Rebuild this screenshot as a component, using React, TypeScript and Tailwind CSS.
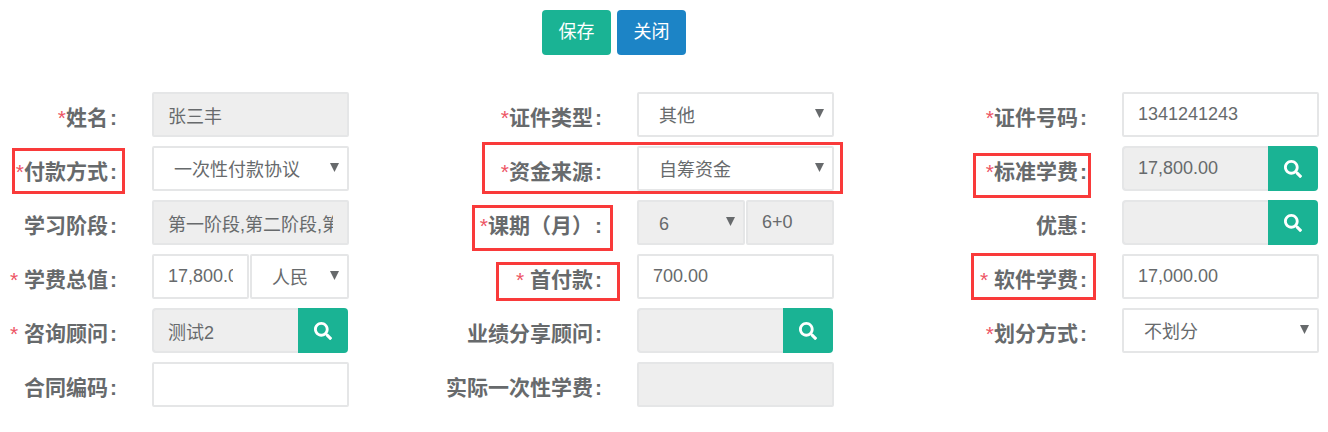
import React from "react";
import { FaSearch } from "react-icons/fa";

const fieldBase =
  "h-[45px] min-w-0 border-2 border-[#e5e6e7] rounded-[2px] text-[18px] text-[#676a6c] outline-none";

const Label = ({ text, star, gap }: { text: string; star?: boolean; gap?: boolean }) => (
  <label className="flex w-[117px] shrink-0 justify-end whitespace-nowrap pt-[11px] text-[21px] leading-[30px] font-bold text-[#676a6c]">
    {star && <span className="whitespace-pre font-normal text-[#ed5565]">*{gap ? " " : ""}</span>}
    <span>{text}</span>
    <span className="ml-[2px]">:</span>
  </label>
);

const Input = ({ value, disabled, className = "flex-1" }: { value?: string; disabled?: boolean; className?: string }) => (
  <input
    readOnly
    value={value ?? ""}
    className={`${fieldBase} px-[14px] ${disabled ? "bg-[#eeeeee]" : "bg-white"} ${className}`}
  />
);

const Select = ({ value, disabled, className = "" }: { value: string; disabled?: boolean; className?: string }) => (
  <div className={`relative ${className}`}>
    <div
      className={`${fieldBase} overflow-hidden whitespace-nowrap pl-[20px] pr-[30px] pt-[9px] ${disabled ? "bg-[#eeeeee]" : "bg-white"}`}
    >
      <div className="overflow-hidden">{value}</div>
    </div>
    <svg viewBox="0 0 9 9" className="absolute right-[10px] top-[17px] h-[9px] w-[9px] fill-[#676a6c]">
      <path d="M0 0h9L4.5 9z" />
    </svg>
  </div>
);

const SearchInput = ({ value }: { value?: string }) => (
  <div className="flex h-[45px] w-[196px]">
    <input
      readOnly
      value={value ?? ""}
      className="h-[45px] min-w-0 flex-1 rounded-l-[4px] border-2 border-r-0 border-[#e5e6e7] bg-[#eeeeee] px-[14px] text-[18px] text-[#676a6c] outline-none"
    />
    <button className="flex h-[45px] w-[50px] items-center justify-center rounded-r-[4px] bg-[#1ab394] text-white">
      <FaSearch size={18} />
    </button>
  </div>
);

const Row = ({ label, children }: { label: React.ReactNode; children: React.ReactNode }) => (
  <div className="flex gap-[35px]">
    {label}
    <div className="flex h-[45px] w-[197px] gap-px">{children}</div>
  </div>
);

const Mark = ({ className }: { className: string }) => (
  <div className={`pointer-events-none absolute border-[3px] border-[#f93a3a] ${className}`} />
);

export default function App() {
  return (
    <div className="relative h-[432px] w-[1328px] overflow-hidden bg-white font-['Liberation_Sans','Noto_Sans_CJK_SC',sans-serif]">
      <div className="flex gap-[6px] pl-[542px] pt-[10px]">
        <button className="h-[45px] w-[69px] rounded-[4px] bg-[#1ab394] text-[18px] text-white">保存</button>
        <button className="h-[45px] w-[69px] rounded-[4px] bg-[#1c84c6] text-[18px] text-white">关闭</button>
      </div>

      <div className="mt-[37px] grid w-[1319px] grid-cols-[349px_349px_349px] gap-x-[136px] gap-y-[9px]">
        <Row label={<Label star text="姓名" />}><Input disabled value="张三丰" /></Row>
        <Row label={<Label star text="证件类型" />}><Select value="其他" className="w-full" /></Row>
        <Row label={<Label star text="证件号码" />}><Input value="1341241243" /></Row>

        <Row label={<Label star text="付款方式" />}><Select value="一次性付款协议" className="w-full" /></Row>
        <Row label={<Label star text="资金来源" />}><Select value="自筹资金" className="w-full" /></Row>
        <Row label={<Label star text="标准学费" />}><SearchInput value="17,800.00" /></Row>

        <Row label={<Label text="学习阶段" />}><Input disabled value="第一阶段,第二阶段,第三阶段" /></Row>
        <Row label={<Label star text="课期（月）" />}>
          <Select disabled value="6" className="w-[108px] shrink-0" />
          <Input disabled value="6+0" className="w-[88px]" />
        </Row>
        <Row label={<Label text="优惠" />}><SearchInput /></Row>

        <Row label={<Label star gap text="学费总值" />}>
          <Input value="17,800.00" className="w-[97px] shrink-0" />
          <Select value="人民" className="w-[99px] shrink-0" />
        </Row>
        <Row label={<Label star gap text="首付款" />}><Input value="700.00" /></Row>
        <Row label={<Label star gap text="软件学费" />}><Input value="17,000.00" /></Row>

        <Row label={<Label star gap text="咨询顾问" />}><SearchInput value="测试2" /></Row>
        <Row label={<Label text="业绩分享顾问" />}><SearchInput /></Row>
        <Row label={<Label star text="划分方式" />}><Select value="不划分" className="w-full" /></Row>

        <Row label={<Label text="合同编码" />}><Input /></Row>
        <Row label={<Label text="实际一次性学费" />}><Input disabled /></Row>
      </div>

      {/* red annotation boxes */}
      <Mark className="left-[12px] top-[148px] h-[46px] w-[113px]" />
      <Mark className="left-[482px] top-[142px] h-[52px] w-[361px]" />
      <Mark className="left-[472px] top-[205px] h-[46px] w-[141px]" />
      <Mark className="left-[496px] top-[262px] h-[39px] w-[124px]" />
      <Mark className="left-[973px] top-[153px] h-[45px] w-[118px]" />
      <Mark className="left-[971px] top-[253px] h-[47px] w-[125px]" />
    </div>
  );
}
